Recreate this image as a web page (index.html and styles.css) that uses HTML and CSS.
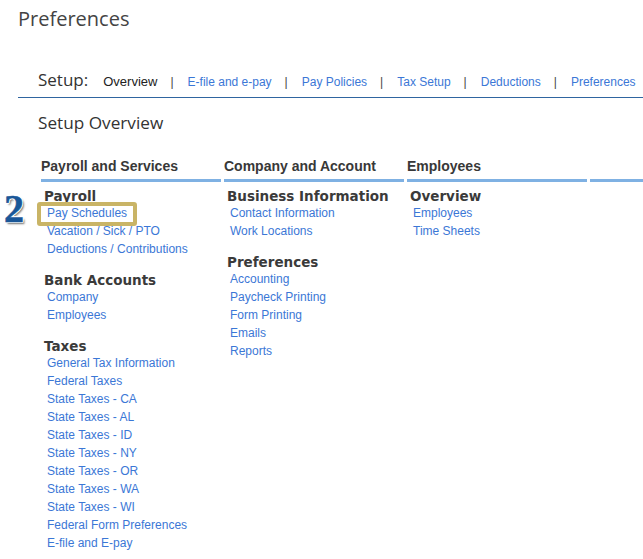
FILE: index.html
```html
<!DOCTYPE html>
<html>
<head>
<meta charset="utf-8">
<title>Preferences</title>
<link rel="stylesheet" href="styles.css">
</head>
<body>
<div class="page">
  <h1 class="title">Preferences</h1>
  <div class="setup-bar">
    <span class="setup-label">Setup:</span>
    <span class="nav-current">Overview</span>
    <span class="sep">|</span>
    <a class="nav-link" href="#">E-file and e-pay</a>
    <span class="sep">|</span>
    <a class="nav-link" href="#">Pay Policies</a>
    <span class="sep">|</span>
    <a class="nav-link" href="#">Tax Setup</a>
    <span class="sep">|</span>
    <a class="nav-link" href="#">Deductions</a>
    <span class="sep">|</span>
    <a class="nav-link" href="#">Preferences</a>
  </div>
  <h2 class="subtitle">Setup Overview</h2>
  <div class="columns">
    <div class="col">
      <div class="col-head">Payroll and Services</div>
      <div class="col-body">
        <div class="section">
          <div class="sec-head">Payroll</div>
          <div class="link-row highlighted"><span class="badge">2</span><a class="link" href="#">Pay Schedules</a></div>
          <div class="link-row"><a class="link" href="#">Vacation / Sick / PTO</a></div>
          <div class="link-row"><a class="link" href="#">Deductions / Contributions</a></div>
        </div>
        <div class="section">
          <div class="sec-head">Bank Accounts</div>
          <div class="link-row"><a class="link" href="#">Company</a></div>
          <div class="link-row"><a class="link" href="#">Employees</a></div>
        </div>
        <div class="section">
          <div class="sec-head">Taxes</div>
          <div class="link-row"><a class="link" href="#">General Tax Information</a></div>
          <div class="link-row"><a class="link" href="#">Federal Taxes</a></div>
          <div class="link-row"><a class="link" href="#">State Taxes - CA</a></div>
          <div class="link-row"><a class="link" href="#">State Taxes - AL</a></div>
          <div class="link-row"><a class="link" href="#">State Taxes - ID</a></div>
          <div class="link-row"><a class="link" href="#">State Taxes - NY</a></div>
          <div class="link-row"><a class="link" href="#">State Taxes - OR</a></div>
          <div class="link-row"><a class="link" href="#">State Taxes - WA</a></div>
          <div class="link-row"><a class="link" href="#">State Taxes - WI</a></div>
          <div class="link-row"><a class="link" href="#">Federal Form Preferences</a></div>
          <div class="link-row"><a class="link" href="#">E-file and E-pay</a></div>
        </div>
      </div>
    </div>
    <div class="col">
      <div class="col-head">Company and Account</div>
      <div class="col-body">
        <div class="section">
          <div class="sec-head">Business Information</div>
          <div class="link-row"><a class="link" href="#">Contact Information</a></div>
          <div class="link-row"><a class="link" href="#">Work Locations</a></div>
        </div>
        <div class="section">
          <div class="sec-head">Preferences</div>
          <div class="link-row"><a class="link" href="#">Accounting</a></div>
          <div class="link-row"><a class="link" href="#">Paycheck Printing</a></div>
          <div class="link-row"><a class="link" href="#">Form Printing</a></div>
          <div class="link-row"><a class="link" href="#">Emails</a></div>
          <div class="link-row"><a class="link" href="#">Reports</a></div>
        </div>
      </div>
    </div>
    <div class="col">
      <div class="col-head">Employees</div>
      <div class="col-body">
        <div class="section">
          <div class="sec-head">Overview</div>
          <div class="link-row"><a class="link" href="#">Employees</a></div>
          <div class="link-row"><a class="link" href="#">Time Sheets</a></div>
        </div>
      </div>
    </div>
    <div class="col">
      <div class="col-head">&nbsp;</div>
    </div>
  </div>
</div>
</body>
</html>
```
FILE: styles.css
```css
html, body {
  margin: 0;
  padding: 0;
  background: #ffffff;
  overflow: hidden;
}

.page {
  width: 643px;
  height: 559px;
  overflow: hidden;
  font-family: "Liberation Sans", Arial, sans-serif;
}

.title {
  margin: 0;
  padding: 5px 0 0 18px;
  font-family: "Open Sans", "Noto Sans", sans-serif;
  font-weight: 400;
  font-size: 20px;
  line-height: 27px;
  color: #444444;
}

.setup-bar {
  margin: 36px 0 0 18px;
  padding: 0 0 6px 20px;
  border-bottom: 1px solid #2f65a0;
  display: flex;
  align-items: baseline;
  white-space: nowrap;
  font-size: 12px;
}

.setup-label {
  font-family: "Open Sans", "Noto Sans", sans-serif;
  font-size: 17px;
  line-height: 23px;
  color: #333333;
  margin-right: 15px;
}

.nav-current {
  font-size: 13px;
  color: #222222;
}

.sep {
  margin: 0 14px 0 13px;
  color: #444444;
}

.nav-link {
  color: #3b77d6;
  text-decoration: none;
}

.subtitle {
  margin: 13px 0 0 38px;
  font-family: "Open Sans", "Noto Sans", sans-serif;
  font-weight: 400;
  font-size: 17.2px;
  line-height: 23px;
  color: #333333;
}

.columns {
  margin: 24px 0 0 41px;
  display: grid;
  grid-template-columns: repeat(4, 180px);
  column-gap: 3px;
}

.col-head {
  font-weight: 700;
  font-size: 14px;
  line-height: 17px;
  color: #383838;
  padding-bottom: 4px;
  border-bottom: 3px solid #7fb1e3;
  white-space: nowrap;
}

.col-body {
  padding-top: 6px;
}

.section + .section {
  margin-top: 14px;
}

.sec-head {
  padding-left: 3px;
  font-family: "DejaVu Sans", Verdana, sans-serif;
  font-weight: 700;
  font-size: 13.5px;
  line-height: 16px;
  color: #3a3a3a;
  white-space: nowrap;
}

.link-row {
  position: relative;
  padding-left: 6px;
  font-size: 12px;
  line-height: 18px;
  white-space: nowrap;
}

.link {
  position: relative;
  color: #3b77d6;
  text-decoration: none;
}

.highlighted::before {
  content: "";
  position: absolute;
  left: -4px;
  top: -2px;
  width: 92px;
  height: 16px;
  border: 4px solid #c9b466;
  border-radius: 3px;
  background: #ffffff;
}

.badge {
  position: absolute;
  left: -37px;
  top: -15px;
  font-family: "Liberation Serif", "Times New Roman", serif;
  font-weight: 700;
  font-size: 40px;
  line-height: 39px;
  color: #1a5798;
  -webkit-text-stroke: 0.6px #1a5798;
  text-shadow: 1px 0 0 #fff, -1px 0 0 #fff, 0 1px 0 #fff, 0 -1px 0 #fff,
    1px 1px 0 #fff, -1px -1px 0 #fff, 1px -1px 0 #fff, -1px 1px 0 #fff,
    2px 2px 2px rgba(0, 0, 0, 0.55);
}
```
